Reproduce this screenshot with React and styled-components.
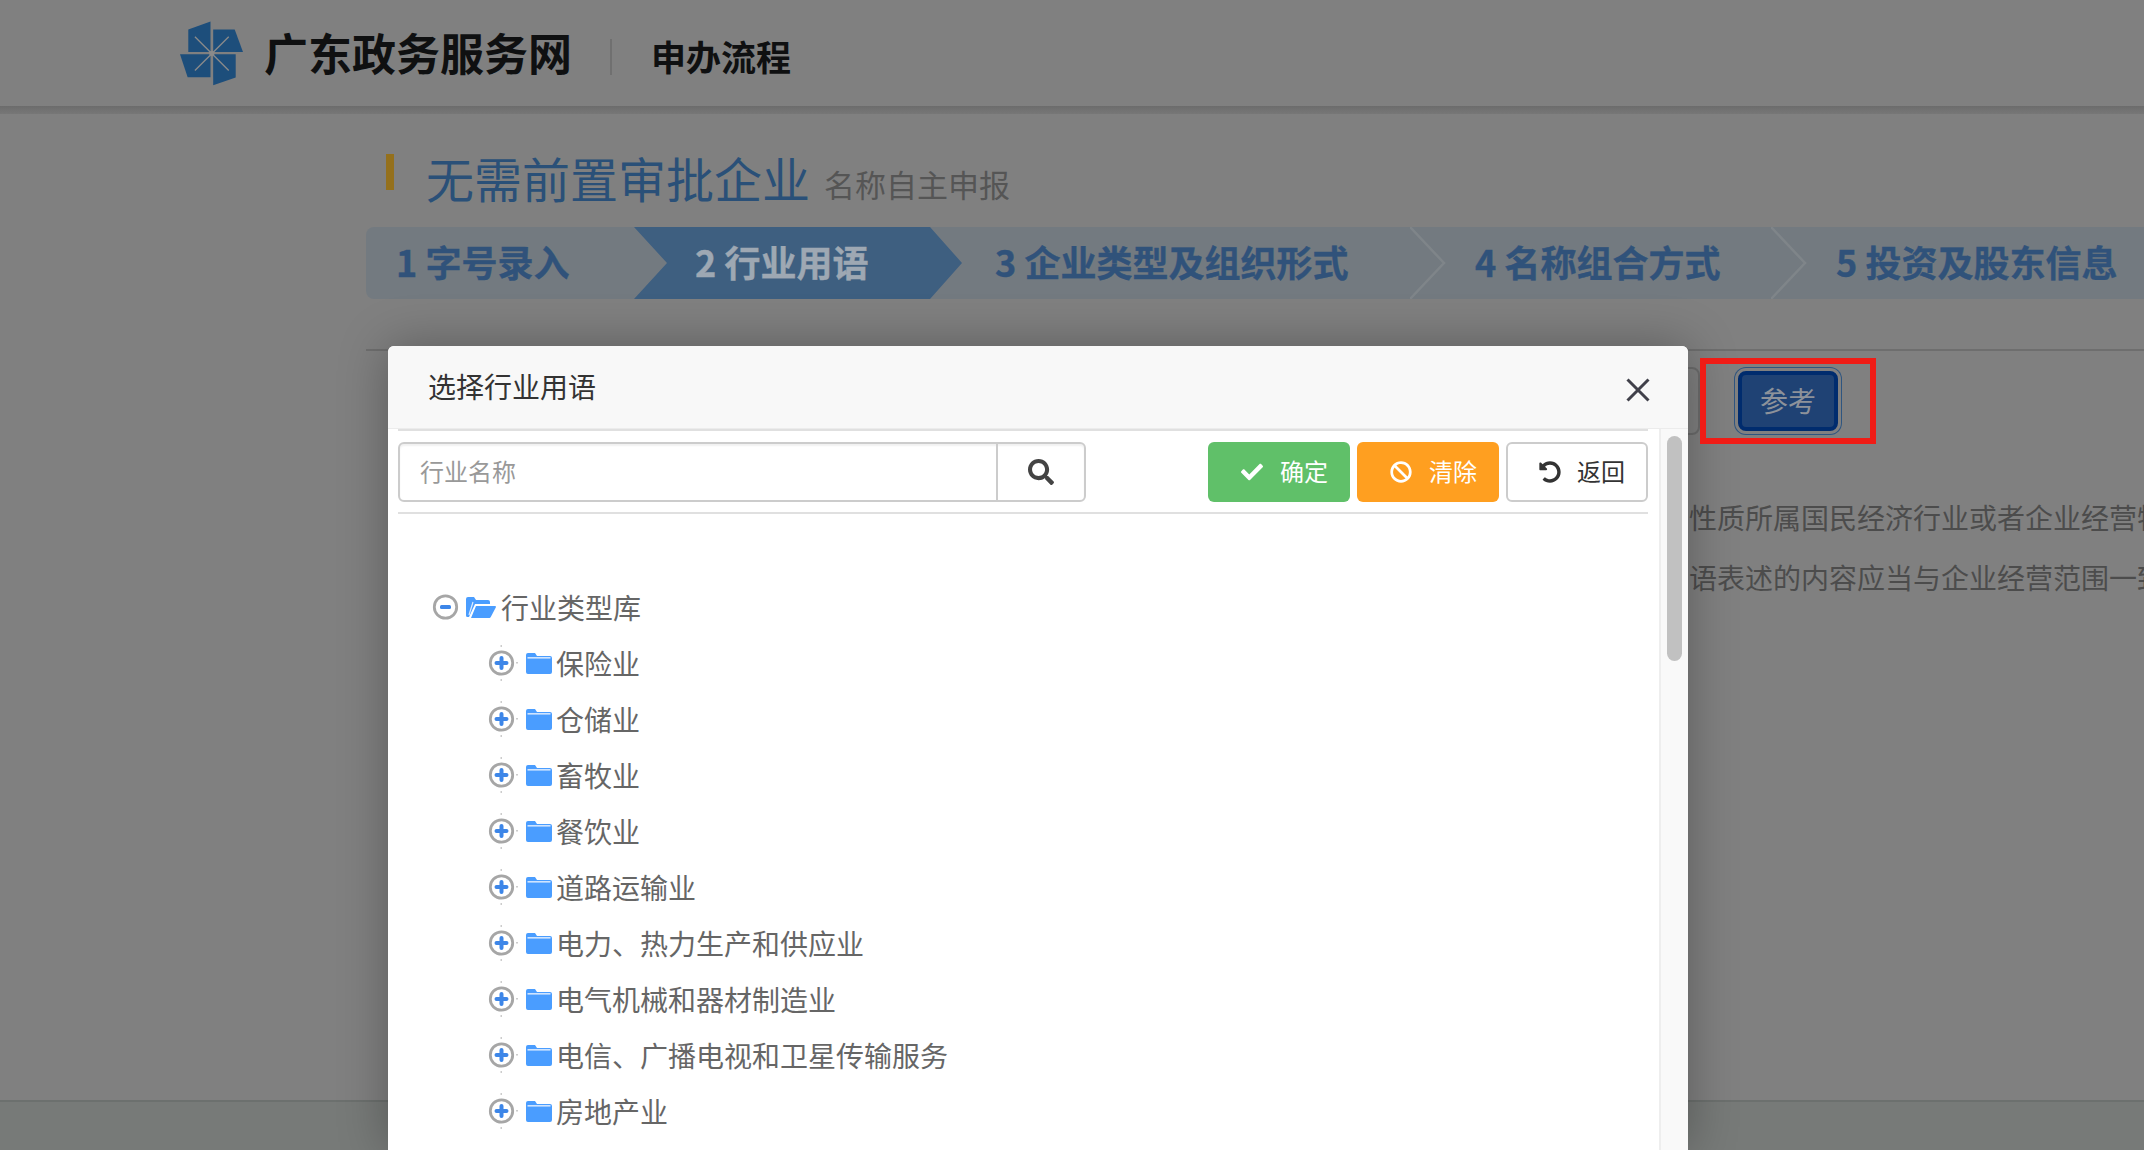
import React from "react";
import styled, { createGlobalStyle } from "styled-components";
import { FaSearch, FaCheck, FaBan, FaUndoAlt } from "react-icons/fa";

const Global = createGlobalStyle`
  html, body { margin: 0; padding: 0; background: #808080; overflow: hidden; }
  * { box-sizing: border-box; }
  body { font-family: "Noto Sans CJK SC", "Liberation Sans", sans-serif; }
`;

const Page = styled.div`
  position: relative; width: 2144px; height: 1150px; overflow: hidden;
  display: flex; flex-direction: column; background: #808080;
`;
const Header = styled.header`
  height: 106px; flex: none; padding-left: 180px;
  display: flex; align-items: center;
`;
const ShadowBand = styled.div`
  height: 8px; flex: none; background: linear-gradient(#6c6c6c, #777);
`;
const BrandName = styled.div`
  margin: -2px 0 0 21px; font-size: 44px; font-weight: 700; line-height: 1; color: #0f1011; white-space: nowrap;
`;
const HeaderSep = styled.div`
  width: 2px; height: 36px; margin: 8px 0 0 38px; background: #707070;
`;
const HeaderSub = styled.div`
  margin: 4px 0 0 39px; font-size: 35px; font-weight: 700; line-height: 1; color: #0f1011; white-space: nowrap;
`;
const Main = styled.main`
  padding-left: 366px; flex: none;
`;
const TitleRow = styled.div`
  display: flex; align-items: flex-start; height: 113px; padding: 40px 0 0 20px;
`;
const TitleMark = styled.div`
  width: 8px; height: 36px; background: #94701c; flex: none;
`;
const PageTitle = styled.h1`
  margin: -4px 0 0 32px; font-size: 48px; font-weight: 400; line-height: 54px; color: #2a5078; white-space: nowrap;
`;
const PageSub = styled.span`
  margin: 3px 0 0 14px; font-size: 31px; line-height: 54px; color: #555; white-space: nowrap;
`;
const StepBar = styled.ol`
  list-style: none; margin: 0; padding: 0; height: 72px; display: flex;
  background: #737a80; border-radius: 8px 0 0 8px; width: 1800px;
`;
const Step = styled.li`
  position: relative; flex: none; height: 72px; width: ${p => p.$w}px; padding: 0 0 5px ${p => p.$pad}px;
  display: flex; align-items: center; font-size: 36px; font-weight: 700; white-space: nowrap;
  -webkit-text-stroke: .4px currentColor;
  color: ${p => (p.$active ? "#9ea8b3" : "#30527a")};
  background: ${p => (p.$active ? "#3e5f80" : "transparent")};
  ${p => p.$active && `
    margin-right: -32px; z-index: 1;
    clip-path: polygon(0 0, 296px 0, 328px 36px, 296px 72px, 0 72px, 33px 36px);
  `}
`;
const StepChevron = styled.svg`
  position: absolute; right: -36px; top: 0; width: 36px; height: 72px; z-index: 1;
`;
const Rule = styled.div`
  margin-top: 50px; height: 2px; background: #6e6e6e;
`;
const FieldRow = styled.div`
  display: flex; align-items: center; margin-top: 16px;
`;
const HiddenField = styled.div`
  width: 1200px; height: 68px; margin-left: 134px; border: 2px solid #6c6c6c; border-radius: 8px; flex: none;
`;
const RefButton = styled.div`
  margin-left: 38px; width: 100px; height: 60px; padding-bottom: 3px; flex: none;
  display: flex; align-items: center; justify-content: center;
  font-size: 28px; color: #8d929a; background: #1f4274;
  border: 4px solid #002c6e; border-radius: 8px;
  box-shadow: 0 0 0 3px #808080, 0 0 0 4px #2e5580;
`;
const Para = styled.p`
  margin: 0 0 0 1323px; font-size: 28px; line-height: 60px; color: #4c4c4c; white-space: nowrap;
  &:first-of-type { margin-top: 52px; }
`;
const Footer = styled.footer`
  margin-top: auto; height: 50px; flex: none; background: #777a78; border-top: 2px solid #6c706e;
`;
const Highlight = styled.div`
  position: absolute; left: 1700px; top: 358px; width: 176px; height: 86px;
  border: 6px solid #f01c16; z-index: 3;
`;

const Modal = styled.section`
  position: absolute; left: 388px; top: 346px; width: 1300px; height: 804px; z-index: 2;
  background: #fff; border-radius: 6px 6px 0 0; box-shadow: 0 0 50px rgba(0,0,0,.3);
  display: flex; flex-direction: column; overflow: hidden;
`;
const ModalHead = styled.div`
  height: 83px; flex: none; padding: 0 38px 0 40px; background: #f8f8f8; border-bottom: 1px solid #ececec;
  display: flex; align-items: center; justify-content: space-between;
`;
const ModalTitle = styled.div`
  font-size: 28px; line-height: 1; color: #333; margin-top: -2px;
`;
const CloseIcon = styled.svg`
  width: 24px; height: 24px; margin-top: 5px;
`;
const ModalBody = styled.div`
  flex: 1; min-height: 0; display: flex;
`;
const Content = styled.div`
  flex: 1; min-width: 0; padding: 0 11px 0 10px;
`;
const TopLine = styled.div`
  height: 2px; background: #e0e0e0;
`;
const Toolbar = styled.div`
  margin-top: 11px; height: 60px; display: flex; justify-content: space-between;
`;
const SearchBox = styled.div`
  width: 688px; height: 60px; border: 2px solid #ccc; border-radius: 6px;
  display: flex; box-shadow: inset 0 2px 2px rgba(0,0,0,.06);
`;
const SearchInput = styled.div`
  flex: 1; padding: 0 0 3px 20px; font-size: 24px; color: #999; display: flex; align-items: center;
`;
const SearchBtn = styled.div`
  width: 88px; flex: none; border-left: 2px solid #ccc; display: flex; align-items: center; justify-content: center;
  color: #444; font-size: 26px;
`;
const Actions = styled.div`
  display: flex; gap: 7px;
`;
const ActionBtn = styled.div`
  width: 142px; height: 60px; padding-left: ${p => (p.$outline ? 31 : 33)}px; border-radius: 6px;
  display: flex; align-items: center; gap: ${p => (p.$outline ? 16 : 17)}px; font-size: 24px;
  background: ${p => p.$bg}; color: ${p => p.$fg};
  border: ${p => (p.$outline ? "2px solid #ccc" : "none")};
  svg { font-size: 22px; flex: none; }
`;
const ActionLabel = styled.span`
  margin-top: -3px;
`;
const BottomLine = styled.div`
  margin-top: 10px; height: 2px; background: #e0e0e0;
`;
const Tree = styled.ul`
  list-style: none; margin: 0; padding: 65px 0 0 35px;
`;
const TreeRow = styled.li`
  height: 56px; display: flex; align-items: center; font-size: 28px; color: #666; white-space: nowrap;
  margin-left: ${p => (p.$child ? 55 : 0)}px;
`;
const TreeLabel = styled.span`
  margin: -1px 0 0 ${p => (p.$child ? -2 : 0)}px;
`;
const Expander = styled.svg`
  width: 32px; height: 36px; flex: none;
`;
const ClosedFolder = styled.svg`
  width: 26px; height: 22px; flex: none; margin: 0 6px 0 6px;
`;
const OpenFolder = styled.svg`
  width: 30px; height: 22px; flex: none; margin: 0 5px 0 2px;
`;
const Rail = styled.div`
  width: 29px; flex: none; background: #f9f9f9; border-left: 2px solid #eee; padding: 7px 6px 0 6px;
`;
const Thumb = styled.div`
  height: 225px; border-radius: 8px; background: #c1c1c1;
`;

const Logo = () => (
  <svg width="63" height="65" viewBox="60 35 190 195" style={{ flex: "none" }}>
    <g fill="#1d4e7b">
      <polygon points="85,60 152,36 152,128 85,128" />
      <polygon points="160,60 225,60 250,128 160,128" />
      <polygon points="60,135 152,135 152,204 83,204" />
      <polygon points="160,135 228,135 228,205 160,228" />
    </g>
    <g stroke="#8a8a8a" strokeWidth="4" fill="none">
      <line x1="105" y1="82" x2="207" y2="184" />
      <line x1="207" y1="82" x2="105" y2="184" />
    </g>
    <circle cx="156" cy="132" r="8" fill="#8a8a8a" />
  </svg>
);

const Ticks = () => (
  <g fill="#ccc">
    <rect x="12.500" y="0" width="1.500" height="2" />
    <rect x="12.500" y="34" width="1.500" height="2" />
    <rect x="28" y="17" width="2" height="1.500" />
  </g>
);

const ExpandIcon = ({ open }) => (
  <Expander viewBox="0 0 32 36" style={open ? { marginLeft: -1 } : undefined}>
    {!open && <Ticks />}
    <circle cx="13.500" cy="18" r="11.200" fill="#fff" stroke="#a6a6a6" strokeWidth="2.800" />
    {open ? (
      <rect x="8" y="16" width="11" height="4" rx="1.500" fill="#3d86e8" />
    ) : (
      <path d="M13.500 13v10M8.500 18h10" stroke="#3d86e8" strokeWidth="4" strokeLinecap="round" fill="none" />
    )}
  </Expander>
);

const FolderClosed = () => (
  <ClosedFolder viewBox="0 0 26 22">
    <path d="M0 3a2 2 0 0 1 2-2h7l2 3h13a2 2 0 0 1 2 2v14a2 2 0 0 1-2 2H2a2 2 0 0 1-2-2z" fill="#4a9dff" />
    <rect x="1.500" y="5" width="23" height="1.600" fill="#cfe4ff" />
  </ClosedFolder>
);

const FolderOpen = () => (
  <OpenFolder viewBox="0 0 30 22">
    <path d="M0 3a2 2 0 0 1 2-2h6l2 3h12a2 2 0 0 1 2 2v2H9L3 21H1.500A1.500 1.500 0 0 1 0 19.500z" fill="#4a9dff" />
    <path d="M10 10h19c.8 0 1.200.6.9 1.300l-5 9.400c-.4.800-1 1.300-1.900 1.300H5z" fill="#4a9dff" />
    <path d="M3 19 7 6" stroke="#dcebff" strokeWidth="1.200" fill="none" />
  </OpenFolder>
);

const children = [
  "保险业", "仓储业", "畜牧业", "餐饮业", "道路运输业",
  "电力、热力生产和供应业", "电气机械和器材制造业", "电信、广播电视和卫星传输服务", "房地产业",
];

const steps = [
  { w: 268, pad: 30, label: "1 字号录入" },
  { w: 328, pad: 61, label: "2 行业用语", active: true },
  { w: 480, pad: 65, label: "3 企业类型及组织形式", sep: true },
  { w: 361, pad: 65, label: "4 名称组合方式", sep: true },
  { w: 363, pad: 65, label: "5 投资及股东信息" },
];

export default function App() {
  return (
    <Page>
      <Global />
      <Header>
        <Logo />
        <BrandName>广东政务服务网</BrandName>
        <HeaderSep />
        <HeaderSub>申办流程</HeaderSub>
      </Header>
      <ShadowBand />
      <Main>
        <TitleRow>
          <TitleMark />
          <PageTitle>无需前置审批企业</PageTitle>
          <PageSub>名称自主申报</PageSub>
        </TitleRow>
        <StepBar>
          {steps.map(s => (
            <Step key={s.label} $w={s.w} $pad={s.pad} $active={s.active}>
              {s.label}
              {s.sep && (
                <StepChevron viewBox="0 0 36 72">
                  <path d="M0 0 34 36 0 72" fill="none" stroke="#7f8589" strokeWidth="2.500" />
                </StepChevron>
              )}
            </Step>
          ))}
        </StepBar>
        <Rule />
        <FieldRow>
          <HiddenField />
          <RefButton>参考</RefButton>
        </FieldRow>
        <Para>性质所属国民经济行业或者企业经营特点</Para>
        <Para>语表述的内容应当与企业经营范围一致</Para>
      </Main>
      <Footer />
      <Highlight />
      <Modal>
        <ModalHead>
          <ModalTitle>选择行业用语</ModalTitle>
          <CloseIcon viewBox="0 0 24 24">
            <path d="M1.500 1.500 22.500 22.500M22.500 1.500 1.500 22.500" stroke="#40404a" strokeWidth="3" fill="none" />
          </CloseIcon>
        </ModalHead>
        <ModalBody>
          <Content>
            <TopLine />
            <Toolbar>
              <SearchBox>
                <SearchInput>行业名称</SearchInput>
                <SearchBtn><FaSearch /></SearchBtn>
              </SearchBox>
              <Actions>
                <ActionBtn $bg="#60c069" $fg="#fff"><FaCheck /><ActionLabel>确定</ActionLabel></ActionBtn>
                <ActionBtn $bg="#ff9f20" $fg="#fff"><FaBan /><ActionLabel>清除</ActionLabel></ActionBtn>
                <ActionBtn $bg="#fff" $fg="#333" $outline><FaUndoAlt /><ActionLabel>返回</ActionLabel></ActionBtn>
              </Actions>
            </Toolbar>
            <BottomLine />
            <Tree>
              <TreeRow>
                <ExpandIcon open />
                <FolderOpen />
                <TreeLabel>行业类型库</TreeLabel>
              </TreeRow>
              {children.map(c => (
                <TreeRow key={c} $child>
                  <ExpandIcon />
                  <FolderClosed />
                  <TreeLabel $child>{c}</TreeLabel>
                </TreeRow>
              ))}
            </Tree>
          </Content>
          <Rail><Thumb /></Rail>
        </ModalBody>
      </Modal>
    </Page>
  );
}
